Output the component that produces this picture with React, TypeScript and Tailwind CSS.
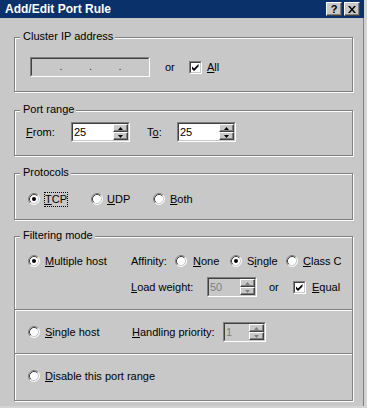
import React from "react";

const Sunken = ({ className = "", inner = "", children }: { className?: string; inner?: string; children?: React.ReactNode }) => (
  <div className={`border border-t-[#808080] border-l-[#808080] border-b-white border-r-white ${className}`}>
    <div className={`h-full w-full border border-t-[#404040] border-l-[#404040] border-b-[#c8c8c8] border-r-[#c8c8c8] ${inner}`}>{children}</div>
  </div>
);

const Radio = ({ checked }: { checked?: boolean }) => (
  <svg width="12" height="12" viewBox="0 0 12 12" className="shrink-0">
    <circle cx="6" cy="6" r="5" fill="#fff" />
    <path d="M2.11 9.89 A5.5 5.5 0 0 1 9.89 2.11" stroke="#808080" fill="none" />
    <path d="M9.89 2.11 A5.5 5.5 0 0 1 2.11 9.89" stroke="#fff" fill="none" />
    <path d="M2.82 9.18 A4.5 4.5 0 0 1 9.18 2.82" stroke="#404040" fill="none" />
    <path d="M9.18 2.82 A4.5 4.5 0 0 1 2.82 9.18" stroke="#c8c8c8" fill="none" />
    {checked && <circle cx="6" cy="6" r="2" fill="#000" />}
  </svg>
);

const Check = () => (
  <Sunken className="w-[13px] h-[13px] shrink-0" inner="bg-white flex items-center justify-center">
    <svg width="9" height="9" viewBox="0 0 9 9">
      <path d="M1 3.5 L3 5.5 L7.5 1 L7.5 3.5 L3 8 L1 6 Z" fill="#000" />
    </svg>
  </Sunken>
);

const Arrow = ({ up, disabled }: { up?: boolean; disabled?: boolean }) => (
  <svg width="5" height="3" viewBox="0 0 5 3">
    {up ? (
      <path d="M2.5 0 L5 3 L0 3 Z" fill={disabled ? "#808080" : "#000"} />
    ) : (
      <path d="M0 0 L5 0 L2.5 3 Z" fill={disabled ? "#808080" : "#000"} />
    )}
  </svg>
);

const SpinBtn = ({ up, disabled }: { up?: boolean; disabled?: boolean }) => (
  <div className="h-1/2 w-full border border-t-white border-l-white border-b-[#404040] border-r-[#404040] bg-[#c8c8c8] shadow-[inset_-1px_-1px_0_#808080] flex items-center justify-center">
    <Arrow up={up} disabled={disabled} />
  </div>
);

const Spin = ({ className, value, disabled }: { className: string; value: string; disabled?: boolean }) => (
  <Sunken className={`${className} h-[20px] shrink-0`} inner={`flex ${disabled ? "bg-[#c8c8c8]" : "bg-white"}`}>
    <div className={`flex-1 pl-[1px] flex items-center ${disabled ? "text-[#808080]" : "text-black"}`}>{value}</div>
    <div className="w-[15px] h-full flex flex-col">
      <SpinBtn up disabled={disabled} />
      <SpinBtn disabled={disabled} />
    </div>
  </Sunken>
);

const Group = ({ label, className, labelClass = "", children }: { label: string; className: string; labelClass?: string; children?: React.ReactNode }) => (
  <div className={`relative w-[339px] shrink-0 border border-[#808080] shadow-[1px_1px_0_#fff,inset_1px_1px_0_#fff] ${className}`}>
    <span className={`absolute left-[5px] top-[-8px] bg-[#c8c8c8] pl-[3px] pr-[2px] leading-[13px] ${labelClass}`}>{label}</span>
    {children}
  </div>
);

const Divider = () => (
  <div className="shrink-0">
    <div className="h-px bg-[#808080]" />
    <div className="h-px bg-white" />
  </div>
);

export default function App() {
  return (
    <div className="w-[367px] h-[408px] overflow-hidden bg-[#d4d4d4] text-[11px] leading-[13px] text-black font-['Liberation_Sans',Arial,sans-serif]">
      <div className="w-[364px] h-[406px] flex flex-col">
        <div className="h-[18px] shrink-0 bg-[#0a316a] flex items-center pl-[5px] pr-[4px]">
          <span className="flex-1 text-white font-bold text-[12px] leading-[14px]">Add/Edit Port Rule</span>
          <div className="w-[16px] h-[14px] border border-t-white border-l-white border-b-[#404040] border-r-[#404040] bg-[#c8c8c8] shadow-[inset_-1px_-1px_0_#808080] flex items-center justify-center font-bold text-[11px] leading-[11px]">
            ?
          </div>
          <div className="ml-[2px] w-[16px] h-[14px] border border-t-white border-l-white border-b-[#404040] border-r-[#404040] bg-[#c8c8c8] shadow-[inset_-1px_-1px_0_#808080] flex items-center justify-center">
            <svg width="8" height="7" viewBox="0 0 8 7">
              <path d="M0 0 L2 0 L4 2.5 L6 0 L8 0 L5 3.5 L8 7 L6 7 L4 4.5 L2 7 L0 7 L3 3.5 Z" fill="#000" />
            </svg>
          </div>
        </div>
        <div className="flex-1 bg-[#c8c8c8] border-r border-[#808080] pt-[19px] pl-[14px] flex flex-col">
          <Group label="Cluster IP address" className="h-[55px]">
            <div className="pt-[19px] pl-[15px] flex items-center h-[39px]">
              <Sunken className="w-[120px] h-[20px]" inner="bg-[#c8c8c8] flex items-center pl-[1px]">
                <div className="flex-1" />
                <span className="text-[#404040] leading-[8px] pb-[2px]">.</span>
                <div className="flex-1" />
                <span className="text-[#404040] leading-[8px] pb-[2px]">.</span>
                <div className="flex-1" />
                <span className="text-[#404040] leading-[8px] pb-[2px]">.</span>
                <div className="flex-1" />
              </Sunken>
              <span className="ml-[15px] w-[24px]">or</span>
              <Check />
              <span className="ml-[5px]"><u>A</u>ll</span>
            </div>
          </Group>

          <Group label="Port range" className="h-[46px] mt-[18px]">
            <div className="pt-[11px] pl-[11px] flex items-center">
              <span className="w-[45px]"><u>F</u>rom:</span>
              <Spin className="w-[59px]" value="25" />
              <span className="ml-[17px] w-[30px]">T<u>o</u>:</span>
              <Spin className="w-[59px]" value="25" />
            </div>
          </Group>

          <Group label="Protocols" className="h-[47px] mt-[17px]">
            <div className="pt-[17px] pl-[13px] flex items-center h-[33px]">
              <div className="w-[63px] flex items-center">
                <Radio checked />
                <span className="ml-[4px] border border-dotted border-black px-[0px] leading-[13px]"><u>T</u>CP</span>
              </div>
              <div className="w-[62px] flex items-center">
                <Radio />
                <span className="ml-[4px]"><u>U</u>DP</span>
              </div>
              <div className="flex items-center">
                <Radio />
                <span className="ml-[5px]"><u>B</u>oth</span>
              </div>
            </div>
          </Group>

          <Group label="Filtering mode" className="h-[165px] mt-[16px] flex flex-col">
            <div className="h-[72px] shrink-0 pt-[14px] pl-[13px] flex">
              <div className="w-[103px] h-[20px] flex items-center">
                <Radio checked />
                <span className="ml-[5px]"><u>M</u>ultiple host</span>
              </div>
              <div className="flex flex-col">
                <div className="h-[20px] flex items-center">
                  <span className="w-[44px]">Affinity:</span>
                  <div className="w-[55px] flex items-center">
                    <Radio />
                    <span className="ml-[6px]"><u>N</u>one</span>
                  </div>
                  <div className="w-[56px] flex items-center">
                    <Radio checked />
                    <span className="ml-[5px]">S<u>i</u>ngle</span>
                  </div>
                  <div className="flex items-center">
                    <Radio />
                    <span className="ml-[5px]"><u>C</u>lass C</span>
                  </div>
                </div>
                <div className="mt-[6px] h-[20px] flex items-center">
                  <span className="w-[76px]"><u>L</u>oad weight:</span>
                  <Spin className="w-[50px]" value="50" disabled />
                  <span className="ml-[12px] w-[24px]">or</span>
                  <Check />
                  <span className="ml-[6px]"><u>E</u>qual</span>
                </div>
              </div>
            </div>
            <Divider />
            <div className="h-[42px] shrink-0 pt-[11px] pl-[13px]">
              <div className="h-[20px] flex items-center">
                <div className="w-[104px] flex items-center">
                  <Radio />
                  <span className="ml-[5px]"><u>S</u>ingle host</span>
                </div>
                <span className="w-[91px]"><u>H</u>andling priority:</span>
                <Spin className="w-[43px]" value="1" disabled />
              </div>
            </div>
            <Divider />
            <div className="h-[45px] shrink-0 pt-[11px] pl-[13px]">
              <div className="h-[20px] flex items-center">
                <Radio />
                <span className="ml-[5px]"><u>D</u>isable this port range</span>
              </div>
            </div>
          </Group>
        </div>
      </div>
    </div>
  );
}
